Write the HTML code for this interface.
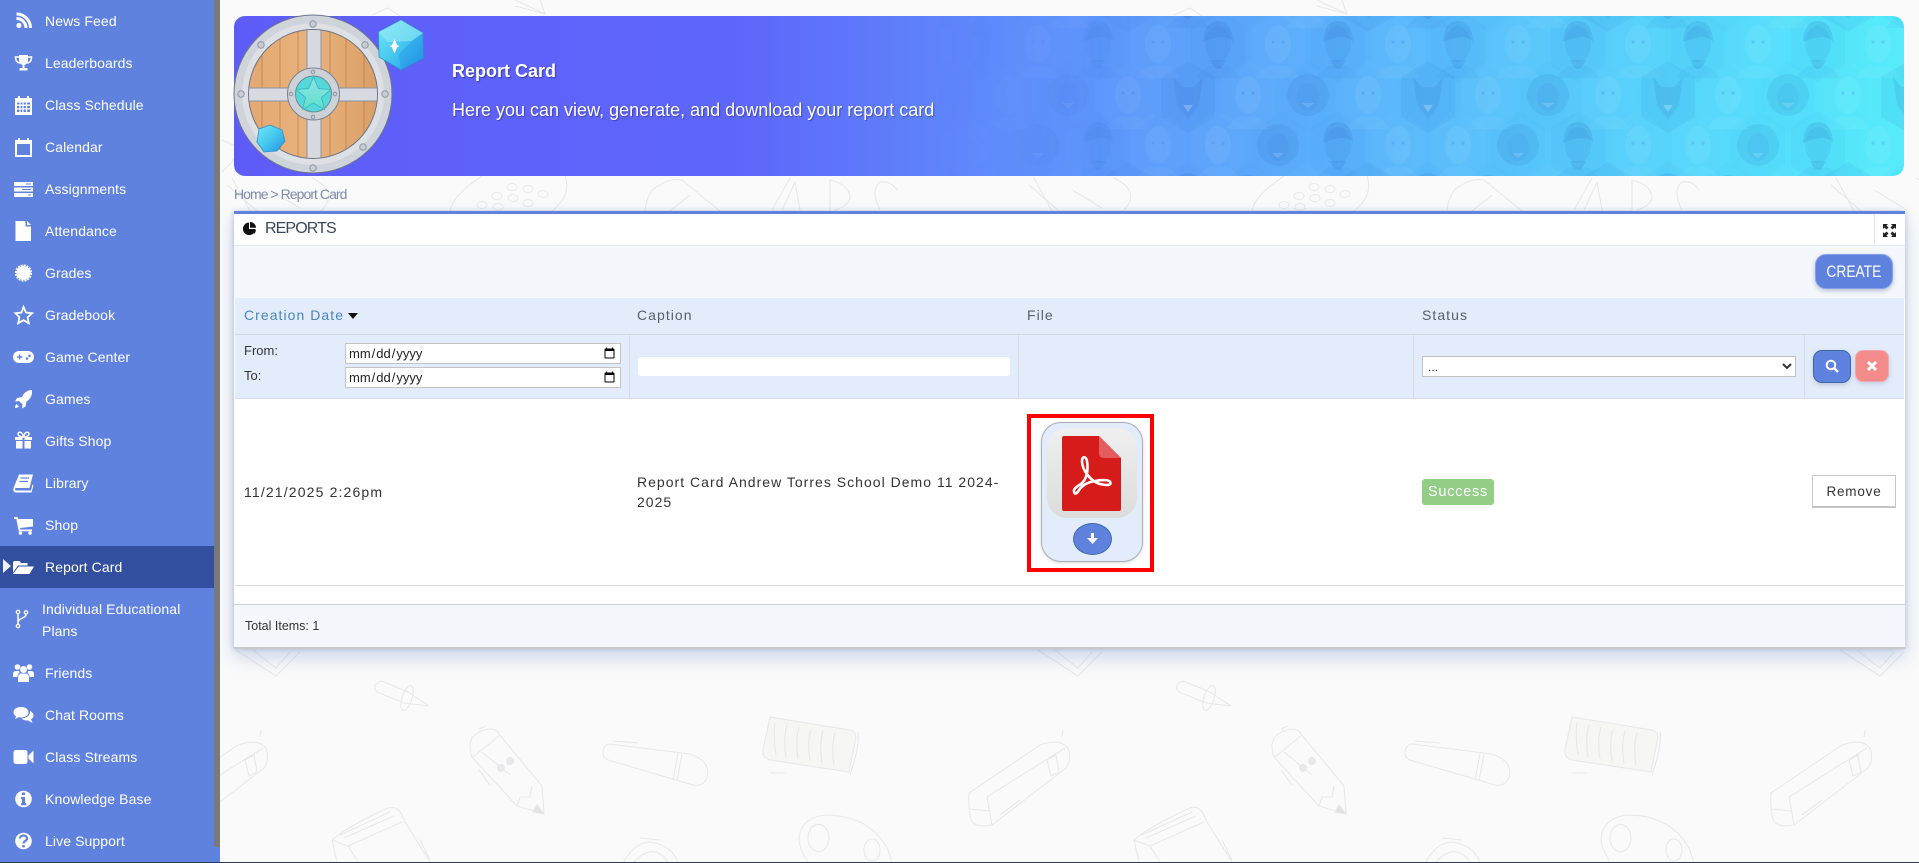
<!DOCTYPE html>
<html lang="en"><head><meta charset="utf-8"><title>Report Card</title>
<style>
html,body{margin:0;padding:0;width:1919px;height:863px;overflow:hidden;background:#fafafa;font-family:"Liberation Sans",sans-serif}
div,span,svg,input,select,button{position:absolute;box-sizing:border-box}
b span,span span{position:static}
.m{left:45px;color:#fff;font-size:14px;line-height:20px;height:20px;white-space:nowrap;letter-spacing:.1px}
.i{left:13px;width:21px;height:20px;fill:#fff}
.t{color:#333;font-size:14px;line-height:20px;white-space:nowrap;letter-spacing:1.02px}
.h{color:#556070;font-size:14px;line-height:20px;letter-spacing:1.05px;top:305px;white-space:nowrap}
.d{height:21px;left:345px;width:276px;font:13px "Liberation Sans",sans-serif;border:1px solid #c4c4c4;background:#fff;padding:0 2px;color:#222}
</style></head>
<body>
<!-- doodle background -->
<svg width="1919" height="863" style="left:0;top:0" viewBox="0 0 1919 863">
<defs><g id="dd" fill="none" stroke="#e8e8ea" stroke-width="1.1">
<path d="M376 684Q380 680 384 682L408 692 429 706 404 703 377 692Q373 688 376 684Z"/><ellipse cx="407" cy="698" rx="5" ry="13" transform="rotate(18 407 698)"/>
<path d="M472 757Q468 746 472 738 480 729 492 729 497 730 499 734L542 786 544 814 517 806ZM473 757 500 735M482 752 510 775M520 797 530 797 532 786M520 797 517 806M479 729 486 726M479 770 490 785"/>
<circle cx="501" cy="768" r="3.500" fill="#e8e8ea"/><circle cx="510" cy="761" r="3.500" fill="#e8e8ea"/><path d="M537 805 544 814 533 812Z" fill="#e2e2e2"/>
<path d="M603 753Q603 745 610 744L690 754Q708 760 708 773 706 787 693 785L608 760Q603 758 603 753ZM678 753 673 780M682 754 677 781M613 741 638 743"/>
<path d="M770 717 850 730Q858 732 855 742L849 772 770 760Q762 758 763 750Z" fill="#f6f6f5"/><path d="M775 723Q773 735 776 755M787 725Q783 738 786 757M799 727Q795 740 798 759M811 729Q807 742 810 761M823 731Q819 744 822 763M835 733Q831 746 834 765M858 732Q860 745 850 775M770 773 785 773"/>
<path d="M969 793 1040 745Q1060 738 1068 748 1072 760 1066 768L992 825Q975 828 971 820 968 805 969 793ZM987 797 1065 748M970 809 989 811M987 797 992 825M1047 760 1056 755 1059 772 1051 776ZM1000 815 1020 800M1062 737 1063 730"/>
<path d="M332 840Q350 825 388 808 395 805 401 813L405 822 430 862M332 840 337 862M332 840 348 846 402 822M348 846 358 862M420 840 430 860M340 835 390 812M344 838 394 816"/>
<path d="M799 840Q800 818 825 815 870 815 888 850L892 863M799 840Q800 850 808 862M808 838a10 13 0 1 0 21 0a10 13 0 1 0-21 0M864 850a8 11 0 1 0 16 0a8 11 0 1 0-16 0"/>
<path d="M623 863Q635 842 650 842 672 845 678 863M633 863Q645 850 655 852 665 855 668 863M640 838 660 840"/>
<path d="M236 650 276 676 300 652M253 650 276 668 290 652"/>
<path d="M450 211Q452 196 482 176M565 176Q572 195 552 211"/>
<g stroke-width=".9"><ellipse cx="482" cy="205" rx="5" ry="3.500"/><ellipse cx="497" cy="196" rx="5" ry="3.500"/><ellipse cx="512" cy="187" rx="5" ry="3.500"/><ellipse cx="498" cy="207" rx="5" ry="3.500"/><ellipse cx="513" cy="198" rx="5" ry="3.500"/><ellipse cx="528" cy="189" rx="5" ry="3.500"/><ellipse cx="528" cy="203" rx="5" ry="3.500"/><ellipse cx="543" cy="194" rx="5" ry="3.500"/></g>
<path d="M645 211Q647 190 660 185 670 178 682 180L720 211M690 195 670 211"/>
<path d="M772 210 790 178M782 210 795 182 800 210M830 210V180Q850 185 850 198 848 206 835 210M880 210Q870 190 880 182 890 180 897 190"/>
<path d="M227 185 257 211M312 178Q340 192 321 211M232 178 250 211M270 190 300 208"/>
<path d="M372 15 388 8 400 16M515 6 545 14 540 0M515 0 545 14"/>
<path d="M222 140 240 148 232 162 222 172"/>
</g></defs>
<use href="#dd"/><use href="#dd" x="802"/><use href="#dd" x="-802"/><use href="#dd" x="1604" />
</svg>

<!-- sidebar -->
<div style="left:0;top:0;width:220px;height:863px;background:#6082df"></div>
<div style="left:214px;top:0;width:6px;height:847px;background:#7a7a7a"></div>
<div style="left:0;top:546px;width:214px;height:42px;background:#324fa0"></div>
<div style="left:0;top:862px;width:1919px;height:1px;background:#2c3a5c"></div>

<div class="m" style="top:11px">News Feed</div>
<svg class="i" style="top:11px" viewBox="0 0 21 20"><circle cx="6" cy="14.500" r="2.600"/><path d="M3.500 7.500a9.500 9.500 0 0 1 9.500 9.500M3.500 3a14 14 0 0 1 14 14" fill="none" stroke="#fff" stroke-width="3"/></svg>
<div class="m" style="top:53px">Leaderboards</div>
<svg class="i" style="top:53px" viewBox="0 0 21 20"><path d="M6 2h9v5c0 3-2 5-4.500 5S6 10 6 7z"/><path d="M6 4H2.500c0 4 2 6 5 6M15 4h3.500c0 4-2 6-5 6" fill="none" stroke="#fff" stroke-width="1.600"/><path d="M9.500 11h2v4h-2zM6.500 15h8v2.500h-8z"/></svg>
<div class="m" style="top:95px">Class Schedule</div>
<svg class="i" style="top:95px" viewBox="0 0 21 20"><path d="M2 3h3V1h2v2h7V1h2v2h3v17H2z"/><path d="M4 7.500h13v2H4zM4 11h13v2.200H4zM4 14.500h13v2.500H4z" fill="#6082df"/><path d="M7 7v11M10 7v11M13.500 7v11" stroke="#fff" stroke-width="1.200"/></svg>
<div class="m" style="top:137px">Calendar</div>
<svg class="i" style="top:137px" viewBox="0 0 21 20"><path d="M2 3h3V1h2v2h7V1h2v2h3v17H2z"/><path d="M4 7h13v11H4z" fill="#6082df"/></svg>
<div class="m" style="top:179px">Assignments</div>
<svg class="i" style="top:179px" viewBox="0 0 21 20"><path d="M1 3h19v4H1zM1 8.500h19v4H1zM1 14h19v4H1z"/><path d="M13 4.500h5v1h-5zM9 10h9v1H9zM15 15.500h3v1h-3z" fill="#6082df"/></svg>
<div class="m" style="top:221px">Attendance</div>
<svg class="i" style="top:221px" viewBox="0 0 21 20"><path d="M2.500 0h10v5.500h5.500V20H2.500zM14 0l4 4h-4z"/></svg>
<div class="m" style="top:263px">Grades</div>
<svg class="i" style="top:263px" viewBox="0 0 21 20"><circle cx="10.500" cy="10" r="7"/><circle cx="10.500" cy="10" r="7.800" fill="none" stroke="#fff" stroke-width="1.600" stroke-dasharray="2 1.060"/></svg>
<div class="m" style="top:305px">Gradebook</div>
<svg class="i" style="top:305px" viewBox="0 0 21 20"><path d="M10.500 2l2.500 5.500 6 .7-4.400 4.100 1.200 5.900-5.300-3-5.300 3 1.200-5.900L2.500 8.200l6-.7z" fill="none" stroke="#fff" stroke-width="1.800"/></svg>
<div class="m" style="top:347px">Game Center</div>
<svg class="i" style="top:347px" viewBox="0 0 21 20"><rect x="0" y="4" width="21" height="12" rx="6"/><path d="M4 9.300h2V7.500h1.300v1.800h2v1.400h-2v1.800H6v-1.800H4z" fill="#6082df"/><circle cx="14" cy="11.500" r="1.300" fill="#6082df"/><circle cx="16.500" cy="8.800" r="1.300" fill="#6082df"/></svg>
<div class="m" style="top:389px">Games</div>
<svg class="i" style="top:389px" viewBox="0 0 21 20"><path d="M19 1c.500 5-1.500 9-5.500 11.500l-1 5-3.500 2 .5-4-3.500-3.500-4 .5 2-3.500 5-1C11 3.500 14.500 1 19 1z"/><path d="M3.500 15c-1 1-1.500 2.500-1.500 4 1.500 0 3-.500 4-1.500z"/></svg>
<div class="m" style="top:431px">Gifts Shop</div>
<svg class="i" style="top:431px" viewBox="0 0 21 20"><path d="M2 6h7.500v3H2zM11.500 6H19v3h-7.500zM3 10h6.500v7.500H3zM11.500 10H18v7.500h-6.500z"/><path d="M10.500 6C8 6 5 5 5 3s2-2 3-1.500 2.500 3 2.500 4.500c0-1.500 1.500-4 2.500-4.500s3-.5 3 1.500-3 3-5.500 3z" fill="none" stroke="#fff" stroke-width="1.500"/></svg>
<div class="m" style="top:473px">Library</div>
<svg class="i" style="top:473px" viewBox="0 0 21 20"><path d="M6 1.500h14l-3.500 13.500H3c-1.500 0-1 2.500 0 2.500h15l1.500-6 1 .5-2 7.500H3c-2.500 0-3-2.500-2.500-4.500z"/><path d="M7.500 5h8.500M6.500 8.500h8.500" stroke="#6082df" stroke-width="1.200"/></svg>
<div class="m" style="top:515px">Shop</div>
<svg class="i" style="top:515px" viewBox="0 0 21 20"><path d="M1 2h3.500l.7 2H20v7.500L7 13l.4 1.500H19v1.800H5.800L3.300 4H1z"/><circle cx="7.500" cy="18" r="1.800"/><circle cx="17" cy="18" r="1.800"/></svg>
<svg style="left:3px;top:558px;width:8px;height:16px" viewBox="0 0 8 16"><path d="M0 1l8 7-8 7z" fill="#eef1f8"/></svg>
<div class="m" style="top:557px">Report Card</div>
<svg class="i" style="top:557px" viewBox="0 0 21 20"><path d="M0 6q0-2 2-2h4.500l1.500 2h6.500v2.500H5L0 15.500z"/><path d="M5.500 9.500H21l-4.500 7.500H0z"/></svg>
<div class="m" style="top:599px;left:42px">Individual Educational</div>
<div class="m" style="top:621px;left:42px">Plans</div>
<svg class="i" style="top:609px;left:11px" viewBox="0 0 21 20"><circle cx="7" cy="3" r="1.700" fill="none" stroke="#fff" stroke-width="1.300"/><circle cx="15" cy="3.500" r="1.700" fill="none" stroke="#fff" stroke-width="1.300"/><circle cx="7" cy="17" r="1.700" fill="none" stroke="#fff" stroke-width="1.300"/><path d="M7 5v10M15 5.500c0 4-7 3-8 7.500" fill="none" stroke="#fff" stroke-width="1.500"/></svg>
<div class="m" style="top:663px">Friends</div>
<svg class="i" style="top:663px" viewBox="0 0 21 20"><circle cx="4.500" cy="4" r="2.800"/><circle cx="16.500" cy="4" r="2.800"/><circle cx="10.500" cy="6.500" r="3.500"/><path d="M0 14v-3q0-3 3-3h3l.5 2q-2 1-2 4zM21 14v-3q0-3-3-3h-3l-.5 2q2 1 2 4zM5 19v-4q0-4 3-4.500h5q3 .5 3 4.500v4z"/></svg>
<div class="m" style="top:705px">Chat Rooms</div>
<svg class="i" style="top:705px" viewBox="0 0 21 20"><path d="M8 2c4.400 0 7.500 2.300 7.500 5.300S12.400 12.500 8 12.500c-.8 0-1.600 0-2.300-.2L2 14l1-2.800C1.200 10.300.5 8.800.5 7.300.500 4.300 3.600 2 8 2z"/><path d="M17 6c2 1 3.500 2.500 3.500 4.500 0 1.500-1 3-2.500 3.800l1.500 3.700-4.500-2.500c-3 .2-5-.6-6.500-2.300 5 .2 9-3 8.500-7.200z"/></svg>
<div class="m" style="top:747px">Class Streams</div>
<svg class="i" style="top:747px" viewBox="0 0 21 20"><rect x="0.500" y="3" width="14" height="14" rx="2.500"/><path d="M15.500 8.500L20.500 3.500v13l-5-5z"/></svg>
<div class="m" style="top:789px">Knowledge Base</div>
<svg class="i" style="top:789px" viewBox="0 0 21 20"><circle cx="10.500" cy="10" r="8.300"/><path d="M9 3.500h3v2.500H9zM8 8h4v6h1.300v2.300H8V14h1v-3.700H8z" fill="#6082df"/></svg>
<div class="m" style="top:831px">Live Support</div>
<svg class="i" style="top:831px" viewBox="0 0 21 20"><circle cx="10.500" cy="10" r="8.300"/><path d="M7 7.500c0-4 7-4 7 0 0 2.500-3.500 2.500-3.500 5" fill="none" stroke="#6082df" stroke-width="2.200"/><rect x="9.300" y="14" width="2.500" height="2.400" fill="#6082df"/></svg>

<!-- banner -->
<div style="left:234px;top:16px;width:1670px;height:160px;border-radius:11px;overflow:hidden;background:linear-gradient(90deg,#5e5cf9 0%,#5e66fa 30%,#5f8cfb 46%,#5aaefb 64%,#55d8fb 88%,#53ebfb 100%)">
 <svg width="1670" height="160" style="left:0;top:0;-webkit-mask-image:linear-gradient(90deg,transparent 42%,#000 58%);mask-image:linear-gradient(90deg,transparent 42%,#000 58%)">
 <defs>
 <path id="hx" d="M0-36 27-20V20L0 36-27 20V-20Z"/>
 <g id="f1"><use href="#hx" fill="#2a6ad0" opacity=".04"/><ellipse cy="-2" rx="13" ry="18" fill="#1c5bbd" opacity=".09"/><path d="M-15-4Q-14-25 0-25 14-25 15-4 8-14-15-4Z" fill="#184fae" opacity=".12"/><path d="M-8 14Q0 32 8 14Z" fill="#184fae" opacity=".12"/><path d="M-22 32Q-14 20-6 20H6Q14 20 22 32Z" fill="#184fae" opacity=".05"/></g>
 <g id="f2"><use href="#hx" fill="#fff" opacity=".02"/><ellipse cy="-2" rx="13" ry="19" fill="#fff" opacity=".06"/><circle cx="-5" cy="-4" r="1.600" fill="#2a6ad0" opacity=".2"/><circle cx="5" cy="-4" r="1.600" fill="#2a6ad0" opacity=".2"/><path d="M-22 32Q-14 20-6 20H6Q14 20 22 32Z" fill="#fff" opacity=".04"/></g>
 <g id="f3"><use href="#hx" fill="#2a6ad0" opacity=".02"/><circle cy="-2" r="21" fill="#164ea8" opacity=".09"/><ellipse cy="0" rx="11" ry="14" fill="#2a6ad0" opacity=".07"/><path d="M-6 6h12l-6 5z" fill="#fff" opacity=".15"/></g>
 <g id="f4"><use href="#hx" fill="#1c5bbd" opacity=".07"/><path d="M-15-20-6-10H6L15-20 11 8 0 22-11 8Z" fill="#164ea8" opacity=".1"/><path d="M-5 8h10l-5 7z" fill="#fff" opacity=".25"/></g>
 <pattern id="fp" width="240" height="202" patternUnits="userSpaceOnUse" x="-6" y="30">
 <use href="#f1" x="30" y="0"/><use href="#f2" x="90" y="0"/><use href="#f1" x="150" y="0"/><use href="#f2" x="210" y="0"/>
 <use href="#f1" x="30" y="202"/><use href="#f2" x="90" y="202"/><use href="#f1" x="150" y="202"/><use href="#f2" x="210" y="202"/>
 <use href="#f4" x="0" y="51"/><use href="#f2" x="60" y="51"/><use href="#f3" x="120" y="51"/><use href="#f2" x="180" y="51"/><use href="#f4" x="240" y="51"/>
 <use href="#f2" x="30" y="101"/><use href="#f3" x="90" y="101"/><use href="#f1" x="150" y="101"/><use href="#f2" x="210" y="101"/>
 <use href="#f1" x="0" y="152"/><use href="#f3" x="60" y="152"/><use href="#f2" x="120" y="152"/><use href="#f4" x="180" y="152"/><use href="#f1" x="240" y="152"/>
 </pattern></defs>
 <rect width="1670" height="160" fill="url(#fp)"/>
 </svg>
</div>
<!-- shield -->
<svg width="200" height="176" style="left:230px;top:10px" viewBox="230 10 200 176">
 <defs><clipPath id="cw"><circle cx="313" cy="94" r="64"/></clipPath>
 <linearGradient id="wd" x1="0" x2="1"><stop offset="0" stop-color="#e3a873"/><stop offset=".5" stop-color="#e9b27c"/><stop offset="1" stop-color="#d99e66"/></linearGradient>
 <linearGradient id="st" x1="0" y1="0" x2="0" y2="1"><stop offset="0" stop-color="#8ce3e8"/><stop offset="1" stop-color="#62e0c8"/></linearGradient>
 <linearGradient id="gm" x1="0" y1="0" x2="1" y2="1"><stop offset="0" stop-color="#78e6f3"/><stop offset=".5" stop-color="#45c8ef"/><stop offset="1" stop-color="#2291e6"/></linearGradient></defs>
 <circle cx="313" cy="94" r="79" fill="#cfd3da" stroke="#6d7688" stroke-width="1"/>
 <circle cx="313" cy="94" r="71" fill="#dde0e5"/>
 <circle cx="313" cy="94" r="65" fill="#6b7486"/>
 <g clip-path="url(#cw)"><rect x="245" y="28" width="136" height="132" fill="url(#wd)"/>
 <path d="M262 28v132M280 28v132M298 28v132M330 28v132M346 28v132M364 28v132" stroke="#b97c46" stroke-width="1" opacity=".7"/>
 <path d="M307 28h14v132h-14zM245 88h136v13H245z" fill="#d7dbe1" stroke="#8a93a3"/></g>
 <circle cx="313.500" cy="94" r="26" fill="#cdd1d8" stroke="#78828f"/>
 <circle cx="313.500" cy="94" r="18" fill="#55d8dc" stroke="#6b8a95"/>
 <path d="M313.500 77l5 11.500 12.500 1-9.500 8 3 12-11-6.500-11 6.500 3-12-9.500-8 12.500-1z" fill="url(#st)" stroke="#3cbcc0"/>
 <g fill="#c9cdd4" stroke="#8f97a3"><circle cx="313" cy="24" r="3.200"/><circle cx="313" cy="168" r="3.200"/><circle cx="241" cy="94" r="3.200"/><circle cx="385" cy="94" r="3.200"/><circle cx="261" cy="45" r="3.200"/><circle cx="365" cy="45" r="3.200"/><circle cx="363" cy="147" r="3.200"/><circle cx="313" cy="72" r="1.800"/><circle cx="313" cy="117" r="1.800"/><circle cx="291" cy="94" r="1.800"/><circle cx="335" cy="94" r="1.800"/></g>
 <path d="M401 20l22 13 .5 25-22.500 12-22-13-.5-25z" fill="url(#gm)" stroke="#2f8fc8" stroke-width=".8"/>
 <path d="M401 20l-22.500 12 9 10 24-1 11.500-8z" fill="#9cecf6" opacity=".55"/><path d="M423.500 58 401 70l-2-16 13-13 11 -8z" fill="#1f8ee6" opacity=".35"/><path d="M392 47l2.500-6 2.500 6 2.500 1-2.500 1.500-2.500 6-2.500-6-2.500-1.500z" fill="#fff" transform="translate(0 -2)"/>
 <path d="M270 125l12 5 3 11-8 10-13 1-7-10 2-13z" fill="url(#gm)" stroke="#2f8fc8" stroke-width=".8"/>
</svg>
<div style="left:452px;top:60px;color:#fff;font-size:18px;font-weight:bold;line-height:22px;text-shadow:1px 1px 1px rgba(30,30,90,.55);white-space:nowrap">Report Card</div>
<div style="left:452px;top:99px;color:#fff;font-size:18px;line-height:22px;text-shadow:1px 1px 1px rgba(30,30,90,.45);white-space:nowrap">Here you can view, generate, and download your report card</div>
<div style="left:234px;top:184px;color:#7d8aa8;font-size:14px;line-height:20px;letter-spacing:-.95px;white-space:nowrap">Home &gt; Report Card</div>

<!-- panel -->
<div style="left:234px;top:211px;width:1671px;height:438px;background:#fff;border-top:3px solid #6082df;box-shadow:0 8px 18px rgba(80,115,190,.28),-2px 0 4px rgba(90,110,170,.2),2px 0 4px rgba(90,110,170,.15)"></div>
<div style="left:234px;top:245px;width:1671px;height:1px;background:#e6eaf0"></div>
<div style="left:234px;top:246px;width:1671px;height:52px;background:#f4f7fb"></div>
<div style="left:1874px;top:214px;width:1px;height:32px;background:#e2e6ec"></div>
<div style="left:235px;top:298px;width:1669px;height:100px;background:#e3ecfa"></div>
<div style="left:235px;top:334px;width:1669px;height:1px;background:#d3d9e2"></div>
<div style="left:235px;top:398px;width:1669px;height:1px;background:#d8dde5"></div>
<div style="left:629px;top:335px;width:1px;height:63px;background:#d5dbe4"></div>
<div style="left:1018px;top:335px;width:1px;height:63px;background:#d5dbe4"></div>
<div style="left:1413px;top:335px;width:1px;height:63px;background:#d5dbe4"></div>
<div style="left:1804px;top:335px;width:1px;height:63px;background:#d5dbe4"></div>
<div style="left:235px;top:585px;width:1669px;height:1px;background:#dadada"></div>
<div style="left:234px;top:604px;width:1671px;height:1px;background:#cfcfcf"></div>
<div style="left:234px;top:605px;width:1671px;height:42px;background:#f4f7fb"></div>
<div style="left:234px;top:647px;width:1671px;height:2px;background:#c9c9c9"></div>

<svg style="left:243px;top:222px;width:13px;height:13px" viewBox="0 0 13 13"><path d="M6 .5v6.500h6.500A6.300 6.300 0 1 1 6 .5zM7 0a6 6 0 0 1 6 5.800H7zM7.500 8H13a6 6 0 0 1-1.800 3.700z" fill="#111"/></svg>
<div style="left:265px;top:219px;font-size:16px;line-height:20px;color:#3a4658;letter-spacing:-.9px">REPORTS</div>
<svg style="left:1883px;top:224px;width:13px;height:13px" viewBox="0 0 13 13"><path d="M0 0h5L3.500 1.500 5.500 3.500 3.500 5.500 1.500 3.500 0 5zM13 0v5L11.500 3.500 9.500 5.500 7.500 3.500 9.500 1.500 8 0zM0 13V8l1.500 1.500 2-2 2 2-2 2L5 13zM13 13H8l1.500-1.500-2-2 2-2 2 2L13 8z" fill="#222"/></svg>

<div style="left:1815px;top:254px;width:78px;height:35px;border-radius:11px;background:#6082df;border:1px solid #86a0e6;box-shadow:0 2px 5px rgba(70,90,150,.35);color:#fff;font-size:17px;line-height:33px;text-align:center"><span style="position:static;display:inline-block;transform:scaleX(.81)">CREATE</span></div>

<div class="h" style="left:244px;color:#4a85bd">Creation Date</div>
<svg style="left:348px;top:313px;width:10px;height:6px" viewBox="0 0 10 6"><path d="M0 0h10L5 6z" fill="#111"/></svg>
<div class="h" style="left:637px">Caption</div>
<div class="h" style="left:1027px">File</div>
<div class="h" style="left:1422px">Status</div>

<div style="left:244px;top:342px;font-size:13px;line-height:18px;color:#333">From:</div>
<div style="left:244px;top:367px;font-size:13px;line-height:18px;color:#333">To:</div>
<input class="d" type="date" style="top:343px">
<input class="d" type="date" style="top:367px">
<div style="left:638px;top:357px;width:372px;height:19px;background:#fff;border-radius:3px"></div>
<select style="left:1422px;top:356px;width:374px;height:21px;border:1px solid #c2c2c2;background:#fff;font:12px 'Liberation Sans',sans-serif;color:#333;padding:0 0 0 1px"><option>...</option></select>
<div style="left:1813px;top:350px;width:38px;height:33px;border-radius:9px;background:#6082df;border:1px solid #3c66a8;box-shadow:0 2px 4px rgba(70,90,150,.25)"></div>
<svg style="left:1825px;top:359px;width:14px;height:14px" viewBox="0 0 14 14"><circle cx="6" cy="6" r="4.300" fill="none" stroke="#fff" stroke-width="2"/><path d="M9 9l4 4" stroke="#fff" stroke-width="2.400"/></svg>
<div style="left:1855px;top:350px;width:34px;height:32px;border-radius:8px;background:#f48b8b;border:1px solid #eaa;box-shadow:0 2px 4px rgba(70,90,150,.2)"></div>
<svg style="left:1866px;top:360px;width:12px;height:12px" viewBox="0 0 12 12"><path d="M2 2l8 8M10 2l-8 8" stroke="#fff" stroke-width="3"/></svg>

<div class="t" style="left:244px;top:482px;letter-spacing:1.15px">11/21/2025 2:26pm</div>
<div class="t" style="left:637px;top:472px">Report Card Andrew Torres School Demo 11 2024-</div>
<div class="t" style="left:637px;top:492px">2025</div>

<!-- file card -->
<div style="left:1027px;top:414px;width:127px;height:158px;border:4px solid #f00"></div>
<div style="left:1041px;top:422px;width:102px;height:140px;border-radius:20px;background:#e3ecfa;border:1px solid #a9adb5;box-shadow:0 1px 3px rgba(0,0,0,.15)"></div>
<div style="left:1047px;top:428px;width:90px;height:90px;border-radius:20px;background:linear-gradient(#efefef,#dcdcdc)"></div>
<svg style="left:1027px;top:414px;width:127px;height:158px" viewBox="1027 414 127 158">
 <path d="M1064 436h35l22 22v51q0 2-2 2h-55q-2 0-2-2v-71q0-2 2-2z" fill="#d61b1b"/>
 <path d="M1099 436l22 22h-17q-5 0-5-5z" fill="#e55c5f"/>
 <path d="M1074.500 493C1072 489 1078 486 1081 484 1087 479 1088.500 470 1087 461 1086 456 1082 456 1082 461 1082 471 1092 482 1100 484 1104 485 1110.500 486 1110.500 483 1110.500 479 1100 480 1095 481 1086 482.500 1082 486 1079 490 1077.500 493 1075.500 494.500 1074.500 493Z" fill="none" stroke="#fff" stroke-width="2.600"/>
</svg>
<div style="left:1073px;top:523px;width:39px;height:32px;border-radius:50%;background:#6082df;border:1px solid #3f6aa8"></div>
<svg style="left:1086px;top:532px;width:13px;height:13px" viewBox="0 0 13 13"><path d="M5 1h3v5h4l-5.500 6L1 6h4z" fill="#fff"/></svg>

<div style="left:1422px;top:479px;width:72px;height:26px;border-radius:3px;background:#92ce86;color:#fff;font-size:14.500px;line-height:26px;text-align:center;letter-spacing:.75px">Success</div>
<div style="left:1812px;top:475px;width:84px;height:33px;background:#fff;border:1px solid #c8c8c8;border-bottom:2px solid #c4c4c4;color:#333;font-size:13.500px;line-height:32px;text-align:center;letter-spacing:.8px">Remove</div>
<div style="left:245px;top:616px;font-size:12.500px;line-height:20px;color:#333;white-space:nowrap">Total Items: 1</div>
</body></html>
